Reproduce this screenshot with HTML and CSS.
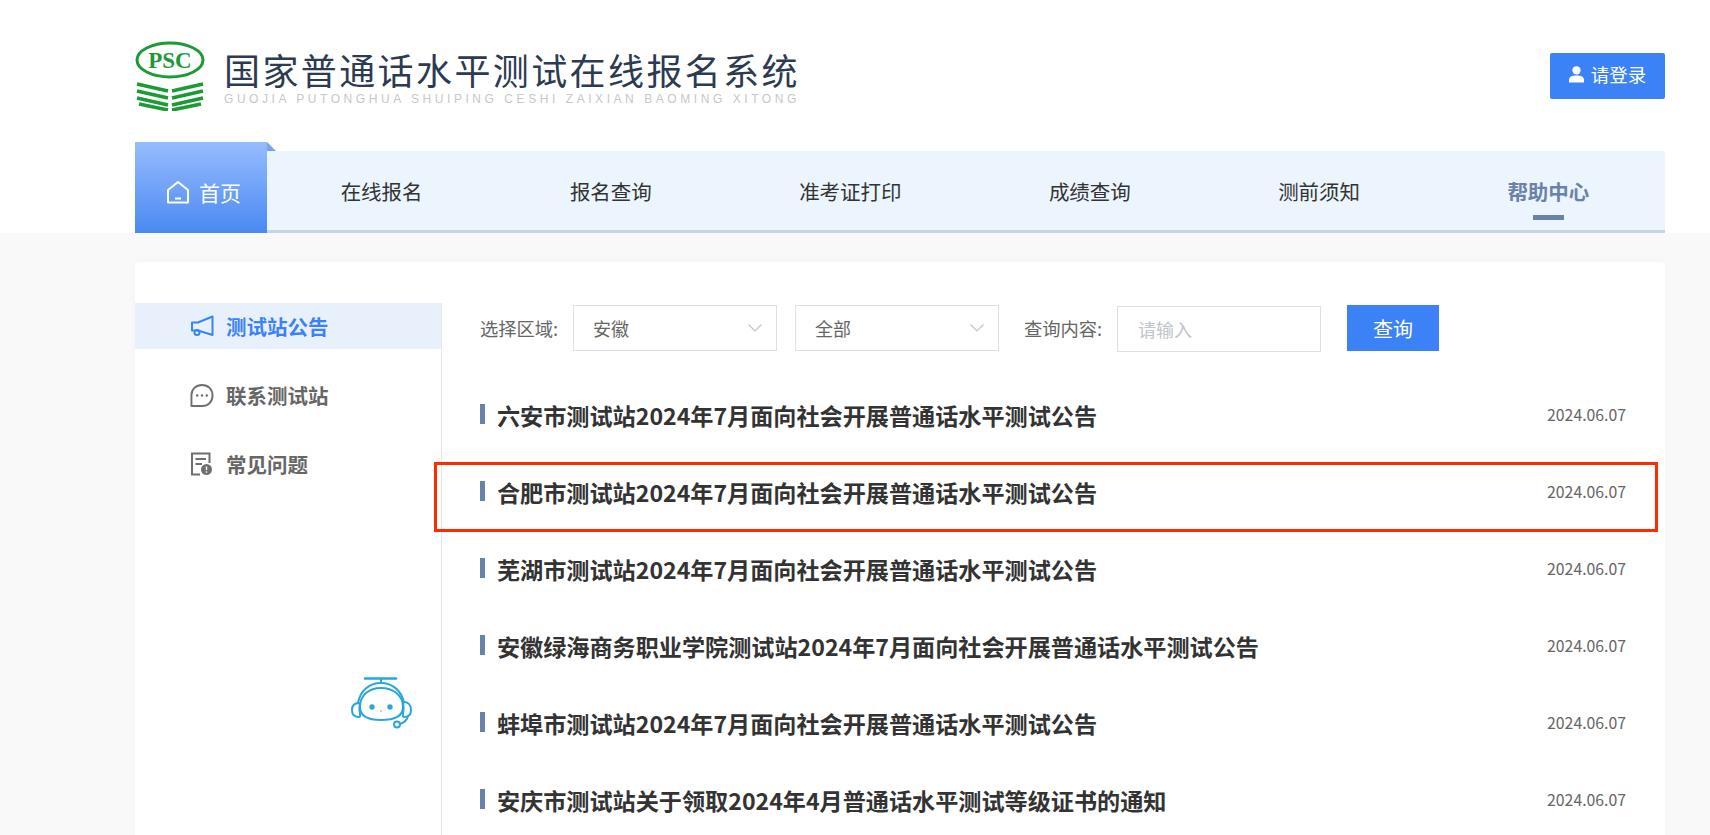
FILE: index.html
```html
<!DOCTYPE html>
<html lang="zh-CN">
<head>
<meta charset="utf-8">
<title>国家普通话水平测试在线报名系统</title>
<link rel="stylesheet" href="styles.css">
</head>
<body>
<header class="header">
  <div class="wrap">
    <div class="topbar">
      <a class="logo">
        <svg class="logo-mark" viewBox="0 0 70 70" width="70" height="70">
          <ellipse cx="35" cy="19" rx="33" ry="17" fill="none" stroke="#1c9a35" stroke-width="3"/>
          <text x="35" y="27" text-anchor="middle" class="psc">PSC</text>
          <g fill="none" stroke="#1c9a35" stroke-width="3.6">
            <path d="M2 43L33 50M68 43L37 50"/>
            <path d="M2 50L33 57M68 50L37 57"/>
            <path d="M2 57L33 64M68 57L37 64"/>
            <path d="M4 63L33 69M66 63L37 69"/>
          </g>
        </svg>
        <span class="logo-text">
          <span class="logo-cn">国家普通话水平测试在线报名系统</span>
          <span class="logo-en">GUOJIA PUTONGHUA SHUIPING CESHI ZAIXIAN BAOMING XITONG</span>
        </span>
      </a>
      <a class="login">
        <svg viewBox="0 0 16 18" width="15" height="18"><circle cx="8" cy="5" r="4.4" fill="#fff"/><path d="M0 18v-2.500C0 12 3 10.500 8 10.500s8 1.500 8 5V18z" fill="#fff"/></svg>
        <span>请登录</span>
      </a>
    </div>
    <nav class="nav">
      <a class="nav-home">
        <svg viewBox="0 0 24 24" width="24" height="24" fill="none" stroke="#fff" stroke-width="2"><path d="M2 10L12 2L22 10V22.500H2Z" stroke-linejoin="round"/><path d="M9 18.500H15"/></svg>
        <span>首页</span>
      </a>
      <div class="nav-items">
        <a class="nav-item">在线报名</a>
        <a class="nav-item">报名查询</a>
        <a class="nav-item">准考证打印</a>
        <a class="nav-item">成绩查询</a>
        <a class="nav-item">测前须知</a>
        <a class="nav-item is-current">帮助中心</a>
      </div>
    </nav>
  </div>
</header>
<main class="wrap">
  <section class="card">
    <aside class="side">
      <a class="side-item is-active">
        <svg viewBox="0 0 24 22" width="24" height="22" fill="none" stroke="#3b82f6" stroke-width="2"><path d="M22.500 1.500V20L8 15.500H2V7.500H8Z" stroke-linejoin="round"/><circle cx="7" cy="17.500" r="2.500"/></svg>
        <span>测试站公告</span>
      </a>
      <a class="side-item">
        <svg viewBox="0 0 25 25" width="24" height="25" fill="none" stroke="#6f6f6f" stroke-width="2"><path d="M12.500 1.500C6 1.500 1.500 6 1.500 12V23.500H12.500C19 23.500 23.500 19 23.500 12.500S19 1.500 12.500 1.500Z" stroke-linejoin="round"/><g fill="#6f6f6f" stroke="none"><circle cx="7.500" cy="12.500" r="1.300"/><circle cx="12.500" cy="12.500" r="1.300"/><circle cx="17.500" cy="12.500" r="1.300"/></g></svg>
        <span>联系测试站</span>
      </a>
      <a class="side-item">
        <svg viewBox="0 0 24 24" width="24" height="24" fill="none" stroke="#6f6f6f" stroke-width="2"><path d="M10 22.500H2V1.500H19.500V11"/><path d="M5.500 7H16M5.500 12H12"/><circle cx="16.500" cy="17.500" r="5.500" fill="#6f6f6f" stroke="none"/><path d="M16.500 14.500V18M16.500 19.200V20.700" stroke="#fff" stroke-width="1.400"/></svg>
        <span>常见问题</span>
      </a>
      <svg class="robot" viewBox="0 0 62 52" width="62" height="52" fill="none" stroke="#2aa6d8" stroke-width="2">
        <path d="M14 1.500H45" stroke-width="2.600" stroke-linecap="round"/>
        <path d="M30 2V6"/>
        <path d="M7 26C9 14 18 6 30 6S50 14 53 25"/>
        <path d="M9 30C9 18 18 11 30 11S52 18 52 30C52 39 43 43 30 43S9 39 9 30Z"/>
        <path d="M8 26C3 26 1 29 1 33S3 40 8 40C10 40 9 38 8.500 33S10 26 8 26Z"/>
        <path d="M53 25C58 25 60 29 60 33S58 40 53 40C51 40 52 38 52.500 33S51 25 53 25Z"/>
        <path d="M57 39C56 44 52 46 49 47"/>
        <circle cx="46" cy="47.500" r="3"/>
        <circle cx="21" cy="30" r="2.700" fill="#2aa6d8" stroke="none"/>
        <circle cx="39" cy="30" r="2.700" fill="#2aa6d8" stroke="none"/>
        <circle cx="30" cy="34" r="1" fill="#f2a7a0" stroke="none"/>
      </svg>
    </aside>
    <div class="content">
      <form class="filters">
        <label class="filter-label">选择区域:</label>
        <div class="select"><span>安徽</span><svg viewBox="0 0 14 8" width="14" height="8" fill="none" stroke="#c0c4cc" stroke-width="1.200"><path d="M.5.5L7 7L13.500.5"/></svg></div>
        <div class="select"><span>全部</span><svg viewBox="0 0 14 8" width="14" height="8" fill="none" stroke="#c0c4cc" stroke-width="1.200"><path d="M.5.5L7 7L13.500.5"/></svg></div>
        <label class="filter-label label-query">查询内容:</label>
        <input class="input" type="text" placeholder="请输入">
        <button class="search" type="button">查询</button>
      </form>
      <ul class="list">
        <li class="row"><a class="row-title">六安市测试站2024年7月面向社会开展普通话水平测试公告</a><time class="row-date">2024.06.07</time></li>
        <li class="row"><a class="row-title">合肥市测试站2024年7月面向社会开展普通话水平测试公告</a><time class="row-date">2024.06.07</time></li>
        <li class="row"><a class="row-title">芜湖市测试站2024年7月面向社会开展普通话水平测试公告</a><time class="row-date">2024.06.07</time></li>
        <li class="row"><a class="row-title">安徽绿海商务职业学院测试站2024年7月面向社会开展普通话水平测试公告</a><time class="row-date">2024.06.07</time></li>
        <li class="row"><a class="row-title">蚌埠市测试站2024年7月面向社会开展普通话水平测试公告</a><time class="row-date">2024.06.07</time></li>
        <li class="row"><a class="row-title">安庆市测试站关于领取2024年4月普通话水平测试等级证书的通知</a><time class="row-date">2024.06.07</time></li>
      </ul>
    </div>
    <div class="mark"></div>
  </section>
</main>
</body>
</html>
```

FILE: styles.css
```css
* { box-sizing: border-box; }
html, body { margin: 0; height: 100%; overflow: hidden; }
body {
  background: #f9f9f9;
  font-family: "Noto Sans CJK SC", "Noto Sans", sans-serif;
  color: #333;
}
a { color: inherit; text-decoration: none; }
ul { list-style: none; margin: 0; padding: 0; }
.wrap { margin: 0 45px 0 135px; }
.header { background: #fff; height: 233px; }
.topbar {
  height: 142px;
  display: flex;
  justify-content: space-between;
  align-items: flex-start;
}
.logo { display: flex; gap: 19px; padding-top: 41px; }
.logo-mark { display: block; }
.psc {
  font-family: "Liberation Serif", serif;
  font-weight: 700;
  font-size: 23px;
  fill: #1c9a35;
}
.logo-text { display: flex; flex-direction: column; padding-top: 6px; }
.logo-cn {
  font-size: 36px;
  line-height: 44px;
  letter-spacing: 2.400px;
  color: #2c3a52;
  white-space: nowrap;
}
.logo-en {
  font-family: "Liberation Sans", sans-serif;
  font-size: 12px;
  line-height: 14px;
  margin-top: 1px;
  letter-spacing: 3.560px;
  color: #c4c8cc;
  white-space: nowrap;
}
.login {
  margin-top: 53px;
  width: 115px;
  height: 46px;
  padding-bottom: 4px;
  background: #3b82f6;
  border-radius: 2px;
  color: #fff;
  font-size: 18.500px;
  display: flex;
  align-items: center;
  justify-content: center;
  gap: 7px;
}
.nav { display: flex; height: 91px; align-items: flex-end; }
.nav-home {
  width: 132px;
  height: 91px;
  background: linear-gradient(#97bcfd, #4a89f3);
  color: #fff;
  font-size: 21px;
  display: flex;
  align-items: center;
  justify-content: center;
  gap: 9px;
  padding-top: 9px;
  padding-left: 5px;
  position: relative;
}
.nav-home::after {
  content: "";
  position: absolute;
  left: 100%;
  top: 0;
  border-style: solid;
  border-width: 9px 0 0 9px;
  border-color: transparent transparent transparent #7ba3e8;
}
.nav-items {
  flex: 1;
  height: 82px;
  background: #ecf4fe;
  border-bottom: 3px solid #c5d5e8;
  display: flex;
  justify-content: space-around;
  padding-right: 2px;
}
.nav-item {
  font-size: 20.500px;
  color: #333;
  display: flex;
  align-items: center;
  position: relative;
}
.is-current { color: #6b82a8; font-weight: 700; }
.is-current::after {
  content: "";
  position: absolute;
  left: 50%;
  bottom: 10px;
  width: 31px;
  height: 5px;
  margin-left: -15px;
  background: #6b82a8;
}
.card {
  margin-top: 29px;
  height: 700px;
  background: #fff;
  border-radius: 4px;
  box-shadow: 0 0 8px rgba(0,0,0,.03);
  display: flex;
  padding-top: 41px;
  position: relative;
}
.side {
  width: 307px;
  flex: none;
  border-right: 1px solid #e6e6e6;
  position: relative;
}
.side-item {
  height: 46px;
  margin-bottom: 23px;
  display: flex;
  align-items: center;
  gap: 12px;
  padding-left: 55px;
  font-size: 20.500px;
  font-weight: 700;
  color: #666;
}
.is-active { background: #e8f0fc; color: #3b82f6; }
.robot { position: absolute; left: 216px; top: 374px; }
.content { flex: 1; padding: 2px 39px 0 38px; min-width: 0; }
.filters { display: flex; align-items: center; height: 46px; }
.filter-label { font-size: 18.300px; color: #666; width: 93px; white-space: nowrap; }
.label-query { margin-left: 25px; }
.select {
  width: 204px;
  height: 46px;
  border: 1px solid #dcdfe6;
  margin-right: 18px;
  padding: 0 14px 0 19px;
  display: flex;
  align-items: center;
  justify-content: space-between;
  font-size: 18px;
  color: #666;
}
.select:nth-of-type(2) { margin-right: 0; }
.input {
  width: 204px;
  height: 46px;
  margin-top: 2px;
  border: 1px solid #dcdfe6;
  padding: 0 20px;
  font: inherit;
  font-size: 18px;
  outline: 0;
}
.input::placeholder { color: #c0c4cc; }
.search {
  margin-left: 26px;
  width: 92px;
  height: 46px;
  border: 0;
  background: #3b82f6;
  color: #fff;
  font: inherit;
  font-size: 20px;
}
.list { margin-top: 25px; }
.row {
  height: 77px;
  display: flex;
  align-items: center;
  justify-content: space-between;
}
.row-title {
  font-size: 23.130px;
  font-weight: 700;
  color: #333;
  padding-left: 17px;
  position: relative;
}
.row-title::before {
  content: "";
  position: absolute;
  left: 0;
  top: 50%;
  width: 5px;
  height: 20px;
  margin-top: -11px;
  background: #6b82a8;
}
.row-date { font-size: 15.800px; color: #666; }
.mark {
  position: absolute;
  left: 299px;
  top: 200px;
  width: 1224px;
  height: 70px;
  border: 3px solid #ff2a00;
}
```
